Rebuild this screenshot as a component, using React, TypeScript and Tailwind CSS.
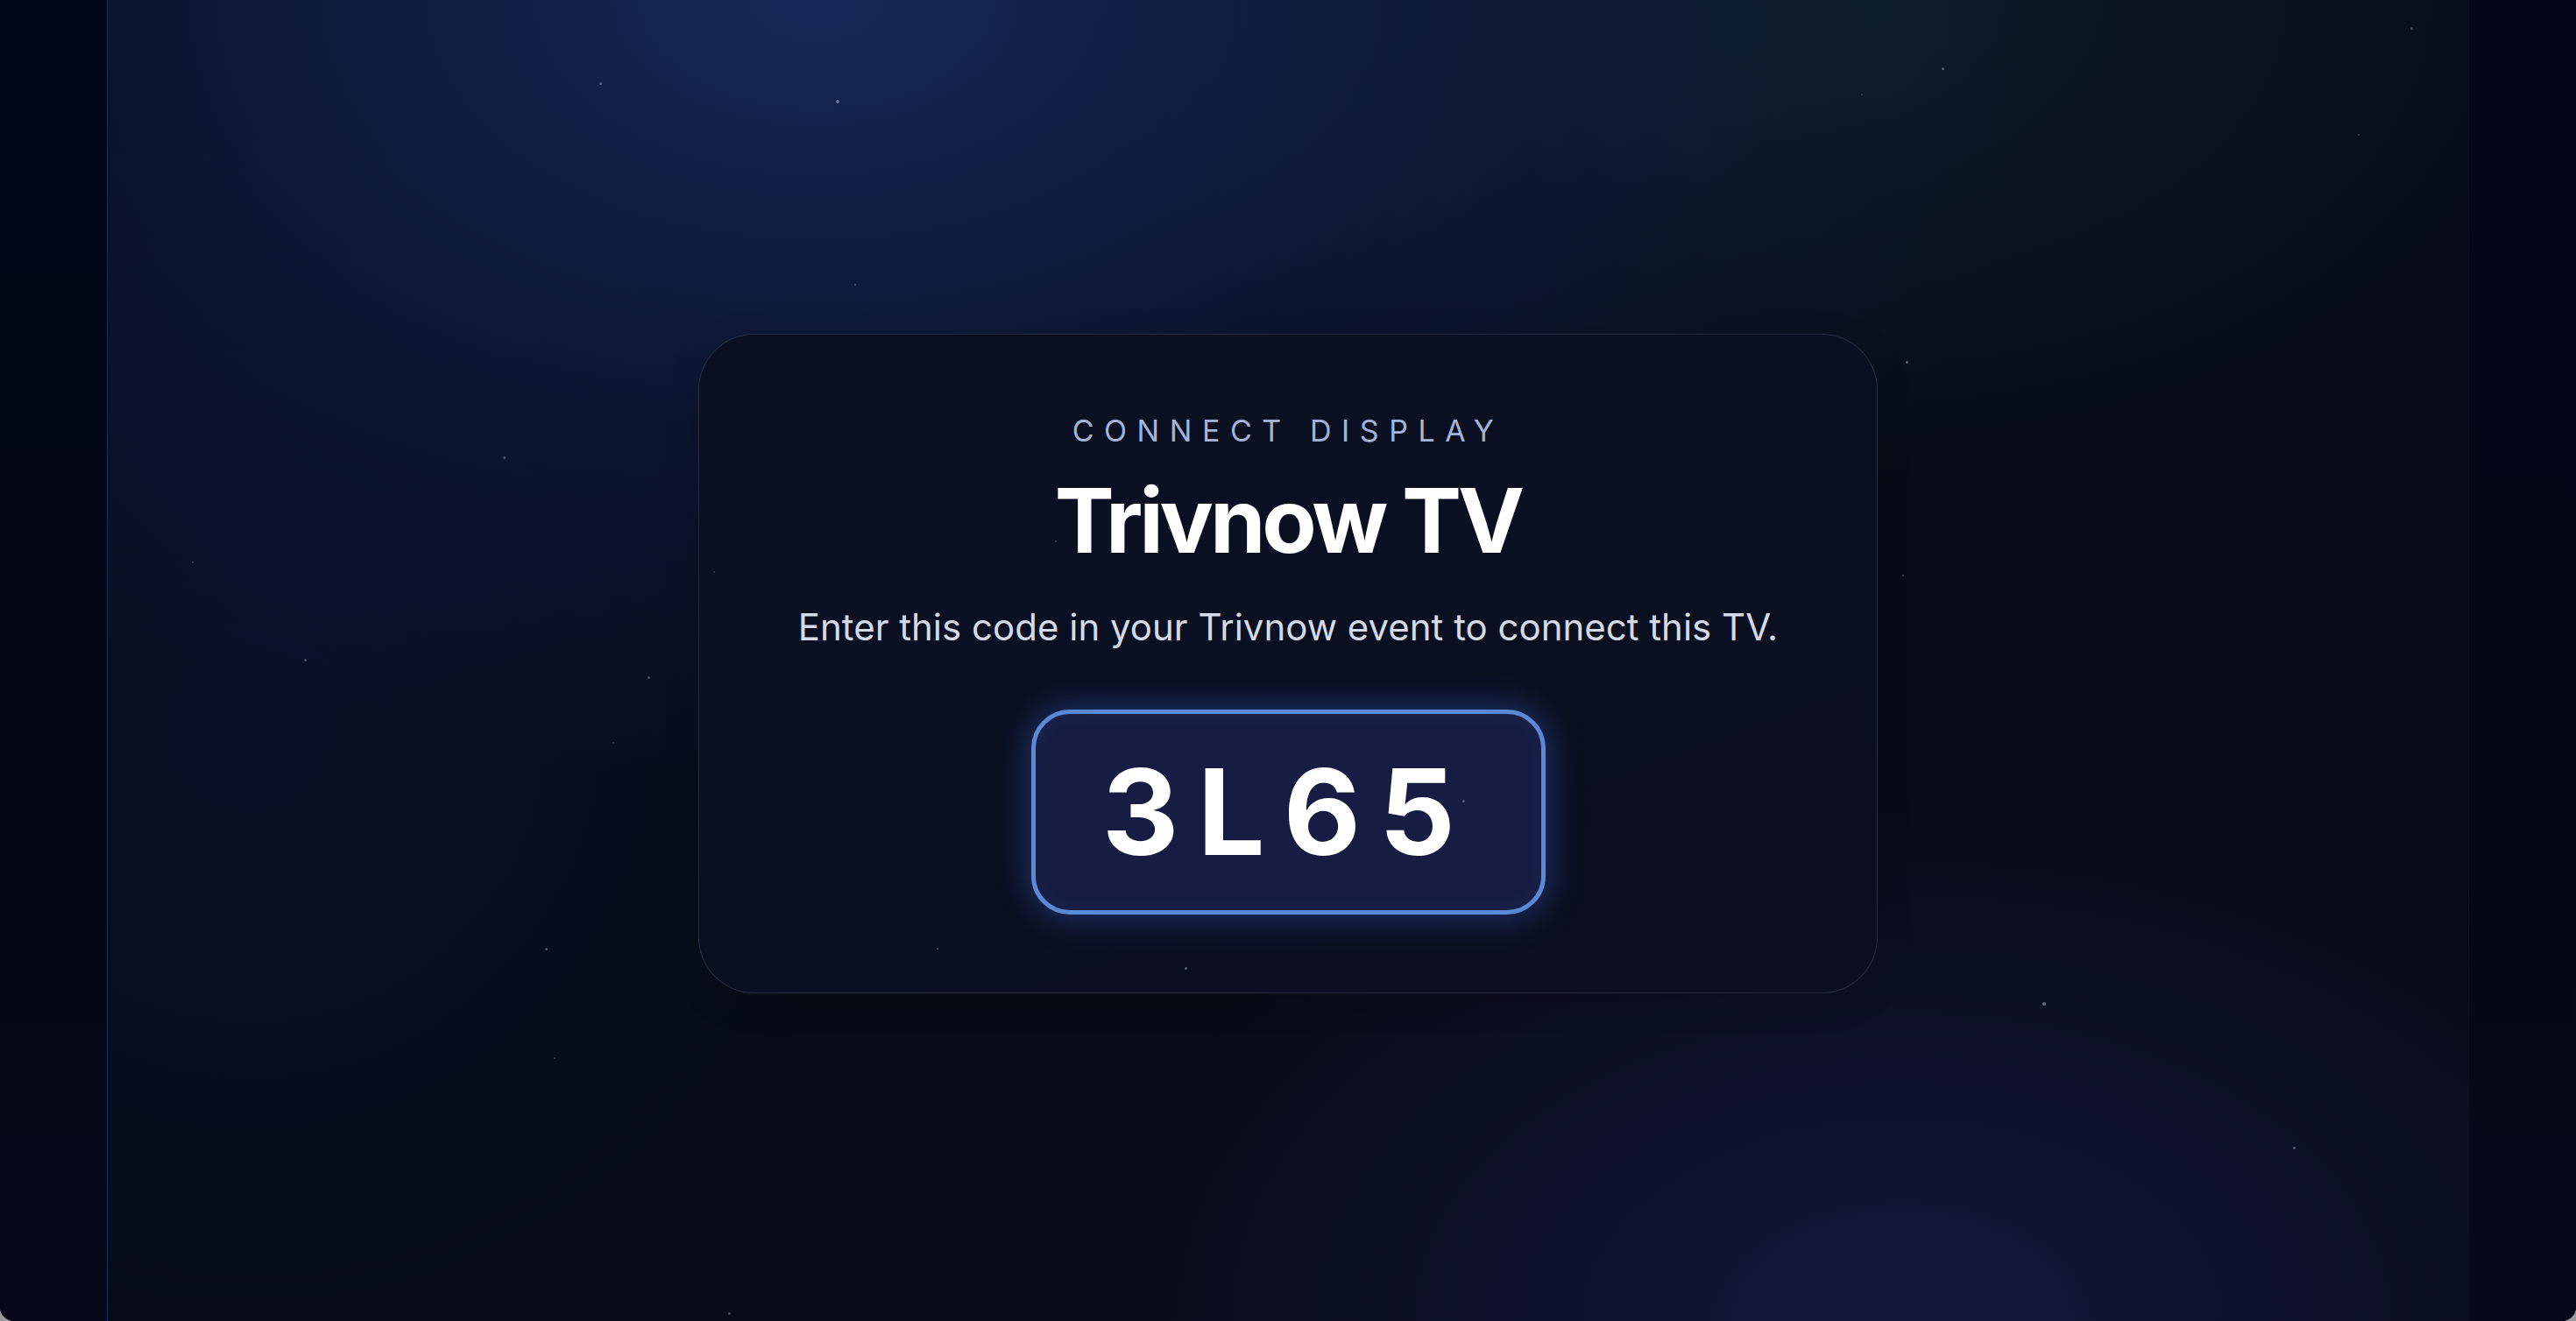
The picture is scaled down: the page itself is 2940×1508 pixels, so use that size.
const stars: [number, number, number, number][] = [
  // left, top, size, opacity
  [684, 94, 3, 0.45],
  [954, 114, 4, 0.6],
  [975, 324, 2, 0.35],
  [2216, 77, 3, 0.5],
  [2124, 107, 2, 0.3],
  [2751, 31, 3, 0.4],
  [2691, 153, 2, 0.3],
  [2175, 412, 3, 0.55],
  [574, 521, 3, 0.4],
  [219, 641, 2, 0.4],
  [347, 752, 3, 0.45],
  [739, 772, 3, 0.4],
  [699, 847, 2, 0.3],
  [814, 652, 2, 0.3],
  [1204, 617, 2, 0.35],
  [2171, 656, 2, 0.4],
  [1669, 913, 3, 0.45],
  [622, 1082, 3, 0.45],
  [632, 1207, 2, 0.35],
  [1069, 1082, 2, 0.4],
  [1352, 1104, 3, 0.55],
  [2331, 1144, 4, 0.6],
  [2617, 1309, 3, 0.5],
  [831, 1498, 3, 0.4],
];

function CodeBox({ code }: { code: string }) {
  return (
    <div className="flex h-[234px] w-[587px] items-center justify-center rounded-[44px] border-[5px] border-[#5a89d6] bg-[#171d42] shadow-[0_0_42px_rgba(64,112,230,0.45),inset_0_0_24px_rgba(60,90,180,0.12)]">
      <span className="text-[136px] font-bold leading-none tracking-[0.155em] text-white">
        {code}
      </span>
    </div>
  );
}

export default function App() {
  return (
    <div className="min-h-screen bg-[#9b9b9b] font-['Inter','Noto_Sans',sans-serif]">
      <div className="relative flex h-[1508px] overflow-hidden rounded-b-[16px] bg-[#030716]">
        <div className="w-[122px] shrink-0 bg-[linear-gradient(180deg,#030818,#030716_60%,#040818)]" />

        <main className="relative flex flex-1 items-center justify-center border-l border-[#1a2c5e] bg-[#070b17] bg-[radial-gradient(ellipse_1700px_1050px_at_30%_0%,rgba(22,42,92,0.95),rgba(16,30,68,0.55)_45%,transparent_85%),radial-gradient(ellipse_1100px_700px_at_74%_0%,rgba(14,32,42,0.8),transparent_80%),radial-gradient(ellipse_1200px_760px_at_76%_100%,rgba(24,26,66,0.8),transparent_80%),radial-gradient(ellipse_900px_900px_at_6%_55%,rgba(12,22,52,0.55),transparent_80%)]">
          <section className="mt-[7px] flex w-[1346px] flex-col items-center rounded-[64px] border border-[rgba(148,163,196,0.2)] bg-[linear-gradient(160deg,rgba(10,16,34,0.97),rgba(11,15,32,0.97))] pt-[93px] pb-[89px] shadow-[0_10px_40px_rgba(0,0,0,0.15)]">
            <p className="text-[34px] font-normal leading-none tracking-[0.34em] text-[#a5b4d6]">
              CONNECT DISPLAY
            </p>
            <h1 className="mt-[34px] text-[102px] font-bold leading-none tracking-[-0.04em] text-white">
              Trivnow TV
            </h1>
            <p className="mt-[50px] text-[42px] leading-none text-[#d5dae6]">
              Enter this code in your Trivnow event to connect this TV.
            </p>
            <div className="mt-[73px]">
              <CodeBox code="3L65" />
            </div>
          </section>
        </main>

        <div className="w-[123px] shrink-0 border-l border-[#0b1124] bg-[linear-gradient(180deg,#030718,#030716_60%,#040818)]" />

        {stars.map(([x, y, s, o], i) => (
          <span
            key={i}
            className="pointer-events-none absolute rounded-full bg-[#a3acc4]"
            style={{ left: x, top: y, width: s, height: s, opacity: o }}
          />
        ))}
      </div>
    </div>
  );
}
